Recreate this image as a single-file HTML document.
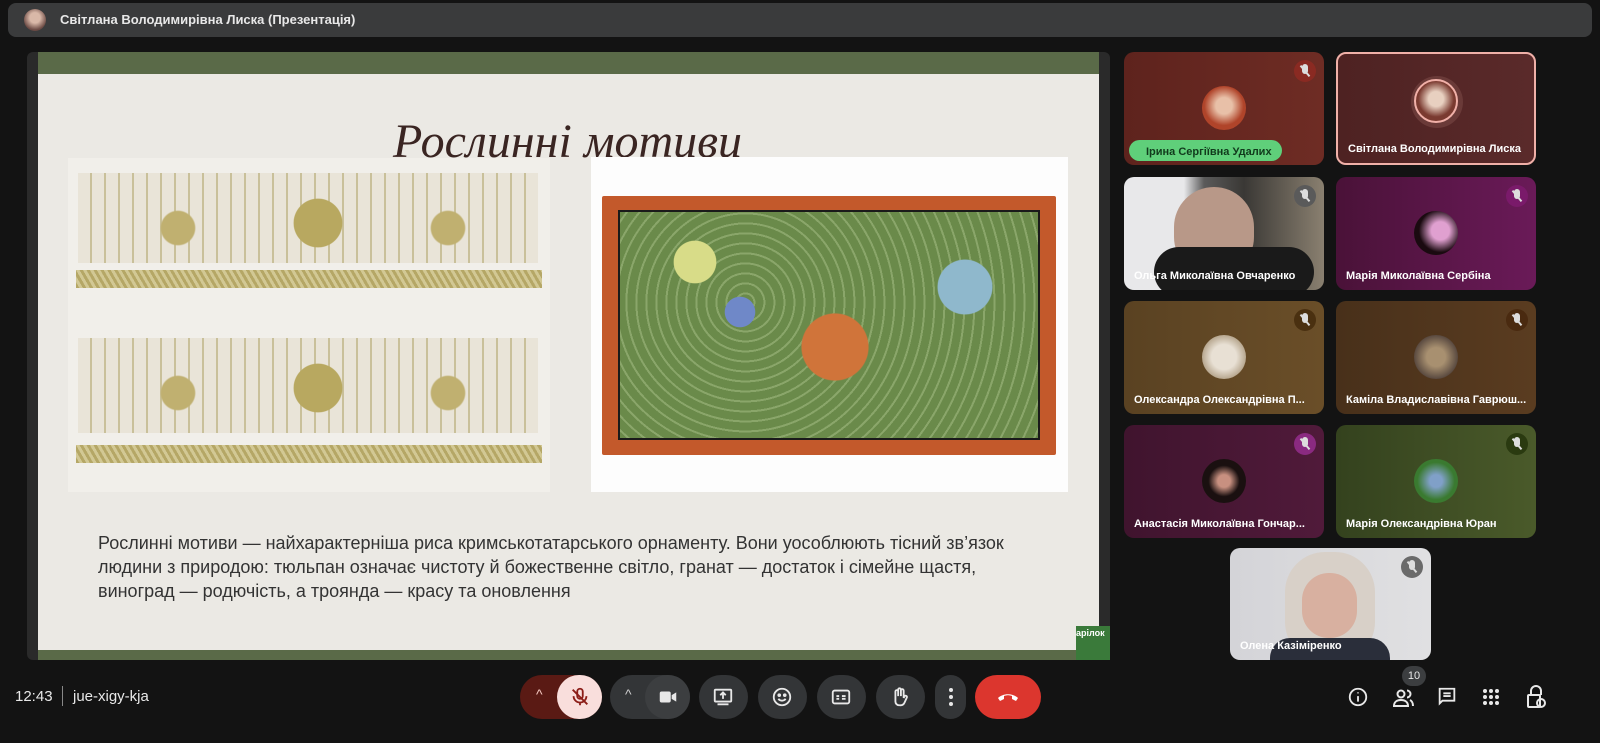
<!DOCTYPE html>
<html><head><meta charset="utf-8"><style>
*{margin:0;padding:0;box-sizing:border-box}
body{width:1600px;height:743px;background:#131313;overflow:hidden;position:relative;font-family:"Liberation Sans","DejaVu Sans",sans-serif;color:#fff}
.abs{position:absolute}
.top{left:8px;top:3px;width:1584px;height:34px;background:#3a3b3c;border-radius:8px}
.top .av{left:16px;top:6px;width:22px;height:22px;border-radius:50%;background:radial-gradient(circle at 50% 40%,#d9b8a8 30%,#6b4a44 70%)}
.top .t{left:52px;top:9px;font-size:13px;font-weight:bold;color:#e8e8e8}
.pres{left:27px;top:52px;width:1083px;height:608px;background:#2a2a2a;border-radius:6px;overflow:hidden}
.slide{left:11px;top:0;width:1061px;height:608px;background:#5a6a48}
.sl{left:0;top:22px;width:1061px;height:576px;background:#ebe9e4}
.title{left:0;top:40px;width:1059px;text-align:center;font-family:"Liberation Serif",serif;font-style:italic;font-size:48px;color:#3a2522}
.emb{left:30px;top:84px;width:482px;height:334px;background:#f1efea}
.tiles{left:553px;top:83px;width:477px;height:335px;background:#fdfdfd}
.panel{left:11px;top:39px;width:454px;height:259px;background:#c3592b;border-radius:2px}
.inner{left:16px;top:14px;width:422px;height:230px;background:#6a8a4a;border:2px solid #1a1a1a}
.desc{left:60px;top:457px;width:935px;font-size:18px;line-height:24px;color:#333}
.tile{position:absolute;width:200px;height:113px;border-radius:10px;overflow:hidden}
.name{position:absolute;left:10px;bottom:8px;font-size:11px;font-weight:bold;color:#fff;white-space:nowrap}
.ava{position:absolute;left:78px;top:34px;width:44px;height:44px;border-radius:50%}
.mic{position:absolute;right:8px;top:8px;width:22px;height:22px;border-radius:50%}
.mic::before{content:"";position:absolute;left:8px;top:4px;width:6px;height:10px;border-radius:3px;background:#ddd}
.mic::after{content:"";position:absolute;left:10px;top:4px;width:2px;height:14px;background:#ddd;transform:rotate(-40deg)}
.bb{position:absolute;top:675px;height:44px;border-radius:22px;background:#333537}
</style></head><body>
<div class="abs top"><div class="abs av"></div><div class="abs t">Світлана Володимирівна Лиска (Презентація)</div></div>

<div class="abs pres">
 <div class="abs slide">
  <div class="abs sl">
   <div class="abs title">Рослинні мотиви</div>
   <div class="abs emb">
     <div class="abs" style="left:10px;top:15px;width:460px;height:90px;background:radial-gradient(ellipse 40px 40px at 240px 50px,#b8a860 60%,transparent 62%),radial-gradient(ellipse 30px 30px at 100px 55px,#c0b070 55%,transparent 60%),radial-gradient(ellipse 30px 30px at 370px 55px,#c0b070 55%,transparent 60%),repeating-linear-gradient(90deg,#e9e4d8 0 12px,#c9c09a 12px 14px)"></div>
     <div class="abs" style="left:8px;top:112px;width:466px;height:18px;background:repeating-linear-gradient(60deg,#b5a766 0 3px,#d2c894 3px 6px)"></div>
     <div class="abs" style="left:10px;top:180px;width:460px;height:95px;background:radial-gradient(ellipse 40px 40px at 240px 50px,#b8a860 60%,transparent 62%),radial-gradient(ellipse 30px 30px at 100px 55px,#c0b070 55%,transparent 60%),radial-gradient(ellipse 30px 30px at 370px 55px,#c0b070 55%,transparent 60%),repeating-linear-gradient(90deg,#e9e4d8 0 12px,#c9c09a 12px 14px)"></div>
     <div class="abs" style="left:8px;top:287px;width:466px;height:18px;background:repeating-linear-gradient(60deg,#b5a766 0 3px,#d2c894 3px 6px)"></div>
   </div>
   <div class="abs tiles"><div class="abs panel"><div class="abs inner" style="background:radial-gradient(circle 55px at 215px 135px,#d0743a 60%,transparent 62%),radial-gradient(circle 45px at 345px 75px,#8fb8cc 60%,transparent 62%),radial-gradient(circle 35px at 75px 50px,#d8dc88 60%,transparent 62%),radial-gradient(circle 25px at 120px 100px,#6f88c8 60%,transparent 62%),repeating-radial-gradient(circle at 30% 40%,#6a8a4a 0 8px,#8aa66a 8px 10px)"></div></div></div>
   <div class="abs desc">Рослинні мотиви — найхарактерніша риса кримськотатарського орнаменту. Вони уособлюють тісний зв’язок людини з природою: тюльпан означає чистоту й божественне світло, гранат — достаток і сімейне щастя, виноград — родючість, а троянда — красу та оновлення</div>
  </div>
 </div>
</div>
<div class="abs" style="left:1076px;top:626px;width:34px;height:34px;background:#3a7a3a"><div style="font-size:9px;font-weight:bold;color:#fff;padding-top:2px">арілок</div></div>

<div class="tile" style="left:1124px;top:52px;background:linear-gradient(90deg,#5e231d,#6e2c24)"><div class="ava" style="background:radial-gradient(circle at 50% 45%,#e8c0a8 25%,#b0442a 60%)"></div><div class="mic" style="background:#8a2a22"></div><div style="position:absolute;left:5px;top:88px;width:153px;height:21px;border-radius:11px;background:#5fcf7a"></div><div class="name" style="color:#113a1c;left:22px;bottom:7px">Ірина Сергіївна Удалих</div></div>
<div class="tile" style="left:1336px;top:52px;background:linear-gradient(90deg,#4e2222,#5a2a2a);border:2px solid #f0b0a8"><div style="position:absolute;left:73px;top:22px;width:52px;height:52px;border-radius:50%;background:#6a3a38"></div><div class="ava" style="left:76px;top:25px;border:2px solid #f0b0a8;background:radial-gradient(circle at 50% 45%,#e8d0c0 25%,#7a3a30 60%)"></div><div class="name">Світлана Володимирівна Лиска</div></div>

<div class="tile" style="left:1124px;top:177px;background:linear-gradient(90deg,#e8e8ea 0 30%,#5a5a5a 40%,#3a3835 60%,#8a8070)"><div style="position:absolute;left:50px;top:10px;width:80px;height:90px;border-radius:40px;background:#b89888"></div><div style="position:absolute;left:30px;top:70px;width:160px;height:50px;border-radius:30px;background:#1a1a1a"></div><div class="mic" style="background:#5a5a5a"></div><div class="name">Ольга Миколаївна Овчаренко</div></div>
<div class="tile" style="left:1336px;top:177px;background:linear-gradient(90deg,#4a1238,#6a1a58)"><div class="ava" style="background:radial-gradient(circle at 60% 45%,#e0a0d0 25%,#1a0a10 60%)"></div><div class="mic" style="background:#7a1a6a"></div><div class="name">Марія Миколаївна Сербіна</div></div>

<div class="tile" style="left:1124px;top:301px;background:linear-gradient(90deg,#5a4222,#6a4e28)"><div class="ava" style="background:radial-gradient(circle,#e8e0d4 40%,#b8a890 70%)"></div><div class="mic" style="background:#4a3010"></div><div class="name">Олександра Олександрівна П...</div></div>
<div class="tile" style="left:1336px;top:301px;background:linear-gradient(90deg,#48301a,#5a3c20)"><div class="ava" style="background:radial-gradient(circle,#a89070 30%,#5a4a40 70%)"></div><div class="mic" style="background:#4a2a10"></div><div class="name">Каміла Владиславівна Гаврюш...</div></div>

<div class="tile" style="left:1124px;top:425px;background:linear-gradient(90deg,#40142e,#501a3a)"><div class="ava" style="background:radial-gradient(circle,#c89080 20%,#1a1010 50%)"></div><div class="mic" style="background:#8a2a80"></div><div class="name">Анастасія Миколаївна Гончар...</div></div>
<div class="tile" style="left:1336px;top:425px;background:linear-gradient(90deg,#34421e,#4a5a2a)"><div class="ava" style="background:radial-gradient(circle,#80a0c8 20%,#3a7a30 60%)"></div><div class="mic" style="background:#2a3a10"></div><div class="name">Марія Олександрівна Юран</div></div>

<div class="tile" style="left:1230px;top:548px;width:201px;height:112px;background:linear-gradient(90deg,#d4d4d8,#e0e0e2)"><div style="position:absolute;left:55px;top:4px;width:90px;height:110px;border-radius:40px;background:#d8d0c8"></div><div style="position:absolute;left:72px;top:25px;width:55px;height:65px;border-radius:27px;background:#d8b0a0"></div><div style="position:absolute;left:40px;top:90px;width:120px;height:30px;border-radius:20px 20px 0 0;background:#2a2e3a"></div><div class="mic" style="background:#6a6a6a"></div><div class="name">Олена Казіміренко</div></div>

<div class="abs" style="left:15px;top:688px;font-size:15px;color:#e8e8e8">12:43</div>
<div class="abs" style="left:62px;top:686px;width:1px;height:20px;background:#888"></div>
<div class="abs" style="left:73px;top:688px;font-size:15px;color:#e8e8e8">jue-xigy-kja</div>

<div class="bb" style="left:520px;width:82px;background:#5a1a14"></div>
<div class="bb" style="left:557px;width:45px;background:#f9dedc"></div>
<div class="abs" style="left:536px;top:686px;color:#f4c8c0;font-size:14px">^</div>
<svg class="abs" style="left:569px;top:686px" width="22" height="22" viewBox="0 0 24 24" fill="none" stroke="#8c1d18" stroke-width="2"><rect x="9" y="3" width="6" height="11" rx="3"/><path d="M5 11a7 7 0 0 0 14 0M12 18v3M4 4l16 16"/></svg>
<div class="bb" style="left:610px;width:80px"></div>
<div class="bb" style="left:645px;width:45px;background:#3c3e40"></div>
<div class="abs" style="left:625px;top:686px;color:#ccc;font-size:14px">^</div>
<svg class="abs" style="left:657px;top:686px" width="22" height="22" viewBox="0 0 24 24" fill="#e8e8e8"><rect x="3" y="6" width="12" height="12" rx="2"/><path d="M16 10l5-3v10l-5-3z"/></svg>
<div class="bb" style="left:699px;width:49px"></div>
<svg class="abs" style="left:712px;top:686px" width="22" height="22" viewBox="0 0 24 24" fill="none" stroke="#e8e8e8" stroke-width="2"><rect x="3" y="4" width="18" height="13" rx="1"/><path d="M12 14V8M9 10l3-3 3 3M6 20h12"/></svg>
<div class="bb" style="left:758px;width:49px"></div>
<svg class="abs" style="left:771px;top:686px" width="22" height="22" viewBox="0 0 24 24" fill="none" stroke="#e8e8e8" stroke-width="2"><circle cx="12" cy="12" r="9"/><circle cx="9" cy="10" r="1" fill="#e8e8e8"/><circle cx="15" cy="10" r="1" fill="#e8e8e8"/><path d="M8 14a5 5 0 0 0 8 0"/></svg>
<div class="bb" style="left:817px;width:49px"></div>
<svg class="abs" style="left:830px;top:686px" width="22" height="22" viewBox="0 0 24 24" fill="none" stroke="#e8e8e8" stroke-width="2"><rect x="3" y="5" width="18" height="14" rx="2"/><path d="M7 11h3M7 14h3M13 11h4M13 14h4"/></svg>
<div class="bb" style="left:876px;width:49px"></div>
<svg class="abs" style="left:889px;top:686px" width="22" height="22" viewBox="0 0 24 24" fill="none" stroke="#e8e8e8" stroke-width="2"><path d="M7 13V6a1.5 1.5 0 0 1 3 0v5V4a1.5 1.5 0 0 1 3 0v7V5a1.5 1.5 0 0 1 3 0v8l1-2a1.5 1.5 0 0 1 2.5 1.5L17 18a5 5 0 0 1-5 3h-1a4 4 0 0 1-4-4z"/></svg>
<div class="bb" style="left:935px;width:31px"></div>
<div class="abs" style="left:949px;top:688px;width:4px;height:4px;border-radius:2px;background:#e8e8e8;box-shadow:0 7px 0 #e8e8e8,0 14px 0 #e8e8e8"></div>
<div class="bb" style="left:975px;width:66px;background:#dc362e"></div>
<svg class="abs" style="left:996px;top:687px" width="24" height="20" viewBox="0 0 24 20" fill="#fff"><path d="M2 11c5-5 15-5 20 0l-2 3-4-2v-3c-3-1-5-1-8 0v3l-4 2z"/></svg>

<svg class="abs" style="left:1347px;top:686px" width="22" height="22" viewBox="0 0 24 24" fill="none" stroke="#e8e8e8" stroke-width="2"><circle cx="12" cy="12" r="9"/><path d="M12 11v6M12 7v1"/></svg>
<div class="abs" style="left:1402px;top:666px;width:24px;height:20px;border-radius:10px;background:#3c3e40;font-size:11px;text-align:center;line-height:20px;color:#e8e8e8">10</div>
<svg class="abs" style="left:1392px;top:688px" width="24" height="20" viewBox="0 0 24 20" fill="none" stroke="#e8e8e8" stroke-width="2"><circle cx="9" cy="6" r="3.5"/><path d="M2 18c0-4 3-6 7-6s7 2 7 6zM15 2.5a3.5 3.5 0 0 1 0 7M18 12c2 1 3 3 3 6"/></svg>
<svg class="abs" style="left:1436px;top:686px" width="22" height="22" viewBox="0 0 24 24" fill="none" stroke="#e8e8e8" stroke-width="2"><path d="M4 3h16v13H7l-3 3z"/><path d="M8 8h8M8 11h8"/></svg>
<svg class="abs" style="left:1481px;top:687px" width="20" height="20" viewBox="0 0 20 20" fill="#e8e8e8"><circle cx="4" cy="4" r="2"/><circle cx="10" cy="4" r="2"/><circle cx="16" cy="4" r="2"/><circle cx="4" cy="10" r="2"/><circle cx="10" cy="10" r="2"/><circle cx="16" cy="10" r="2"/><circle cx="4" cy="16" r="2"/><circle cx="10" cy="16" r="2"/><circle cx="16" cy="16" r="2"/></svg>
<svg class="abs" style="left:1525px;top:685px" width="22" height="24" viewBox="0 0 22 24" fill="none" stroke="#e8e8e8" stroke-width="2"><path d="M6 10V6a5 5 0 0 1 10 0v4"/><rect x="3" y="10" width="12" height="12" rx="1"/><circle cx="16" cy="18" r="4"/></svg>
</body></html>
